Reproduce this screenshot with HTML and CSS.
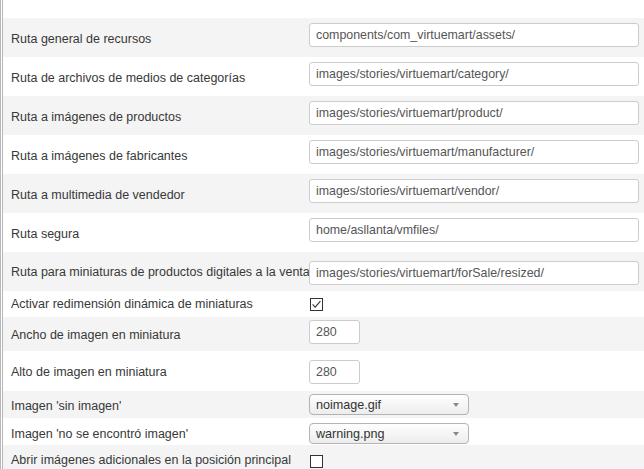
FILE: index.html
```html
<!DOCTYPE html>
<html lang="es">
<head>
    <meta charset="UTF-8">
    <meta name="viewport" content="width=device-width, initial-scale=1.0">
    <title>Configuración de medios</title>
    <link rel="stylesheet" href="styles.css">
</head>
<body>

    <div class="panel">
        <div class="row row-text shade">
            <label class="label" for="assetsPath">Ruta general de recursos</label>
            <input class="field" type="text" id="assetsPath" value="components/com_virtuemart/assets/">
        </div>
        <div class="row row-text">
            <label class="label" for="categoryPath">Ruta de archivos de medios de categorías</label>
            <input class="field" type="text" id="categoryPath" value="images/stories/virtuemart/category/">
        </div>
        <div class="row row-text shade">
            <label class="label" for="productPath">Ruta a imágenes de productos</label>
            <input class="field" type="text" id="productPath" value="images/stories/virtuemart/product/">
        </div>
        <div class="row row-text">
            <label class="label" for="manufacturerPath">Ruta a imágenes de fabricantes</label>
            <input class="field" type="text" id="manufacturerPath" value="images/stories/virtuemart/manufacturer/">
        </div>
        <div class="row row-text shade">
            <label class="label" for="vendorPath">Ruta a multimedia de vendedor</label>
            <input class="field" type="text" id="vendorPath" value="images/stories/virtuemart/vendor/">
        </div>
        <div class="row row-text">
            <label class="label" for="securePath">Ruta segura</label>
            <input class="field" type="text" id="securePath" value="home/asllanta/vmfiles/">
        </div>
        <div class="row row-text row-sale shade">
            <label class="label" for="forSalePath">Ruta para miniaturas de productos digitales a la venta</label>
            <input class="field" type="text" id="forSalePath" value="images/stories/virtuemart/forSale/resized/">
        </div>
        <div class="row row-check">
            <span class="label">Activar redimensión dinámica de miniaturas</span>
            <span class="check">
                <svg width="13" height="13" viewBox="0 0 13 13">
                    <rect x="0.5" y="0.5" width="12" height="12" fill="#fff" stroke="#333"/>
                    <path d="M2.6 6.4 L5.2 9.1 L10.4 3.2" fill="none" stroke="#333" stroke-width="1.1"/>
                </svg>
            </span>
        </div>
        <div class="row row-width shade">
            <label class="label" for="thumbWidth">Ancho de imagen en miniatura</label>
            <input class="field field-small" type="text" id="thumbWidth" value="280">
        </div>
        <div class="row row-height">
            <label class="label" for="thumbHeight">Alto de imagen en miniatura</label>
            <input class="field field-small" type="text" id="thumbHeight" value="280">
        </div>
        <div class="row row-select shade">
            <label class="label" for="noImage">Imagen 'sin imagen'</label>
            <span class="picker">
                <select id="noImage">
                    <option>noimage.gif</option>
                </select>
            </span>
        </div>
        <div class="row row-select row-select-2">
            <label class="label" for="notFound">Imagen 'no se encontró imagen'</label>
            <span class="picker">
                <select id="notFound">
                    <option>warning.png</option>
                </select>
            </span>
        </div>
        <div class="row row-last shade">
            <span class="label">Abrir imágenes adicionales en la posición principal</span>
            <span class="check">
                <svg width="13" height="13" viewBox="0 0 13 13">
                    <rect x="0.5" y="0.5" width="12" height="12" fill="#fff" stroke="#333"/>
                </svg>
            </span>
        </div>
    </div>

</body>
</html>
```

FILE: styles.css
```css
body {
    margin: 0;
    padding: 0;
    background: #fff;
    font-family: 'Liberation Sans', Arial, sans-serif;
    font-size: 12.5px;
    color: #333;
    overflow: hidden;
}

.panel {
    border-left: 3px double #b8b8b8;
    padding-top: 18px;
    min-height: 469px;
    box-sizing: border-box;
}

.row {
    display: grid;
    grid-template-columns: 298px 1fr;
    padding: 0 5px 0 8px;
    box-sizing: border-box;
}

.shade {
    background-color: #f4f4f4;
}

.label {
    align-self: center;
    white-space: nowrap;
    line-height: 16px;
    color: #383838;
    padding-top: 2px;
}

.row-text {
    height: 39px;
}

.row-text .field {
    margin-top: 5px;
}

.row-sale .label {
    padding-top: 0;
}

.row-sale .field {
    margin-top: 9px;
}

.row-check {
    height: 26px;
}

.row-check .label {
    padding-top: 0;
}

.row-width {
    height: 34px;
}

.row-width .field {
    margin-top: 3px;
}

.row-height {
    height: 40px;
}

.row-height .field {
    margin-top: 9px;
}

.row-select {
    height: 27px;
}

.row-select .picker {
    margin-top: 3px;
}

.row-select-2 .label {
    padding-top: 4px;
}

.row-select-2 .picker {
    margin-top: 5px;
}

.row-last {
    height: 26px;
}

.row-last .label {
    padding-top: 4px;
}

.row-last .check {
    margin-top: 10px;
    align-self: start;
}

.field {
    align-self: start;
    display: block;
    width: 100%;
    height: 24px;
    box-sizing: border-box;
    padding: 0 6px;
    border: 1px solid #ccc;
    border-radius: 3px;
    background: #fff;
    font-family: 'Liberation Sans', Arial, sans-serif;
    font-size: 12.4px;
    color: #555;
    outline: none;
}

.field-small {
    width: 51px;
}

.check {
    align-self: center;
    display: block;
    width: 13px;
    height: 13px;
    margin-left: 1px;
}

.check svg {
    display: block;
}

.picker {
    position: relative;
    align-self: start;
    display: block;
    width: 160px;
    height: 21px;
}

.picker select {
    appearance: none;
    -webkit-appearance: none;
    display: block;
    width: 160px;
    height: 21px;
    box-sizing: border-box;
    padding: 0 6px;
    border: 1px solid #b3b3b3;
    border-radius: 4px;
    background: linear-gradient(#fefefe, #ededed);
    font-family: 'Liberation Sans', Arial, sans-serif;
    font-size: 12.6px;
    color: #333;
    outline: none;
}

.picker::after {
    content: "";
    position: absolute;
    right: 10px;
    top: 9px;
    border-left: 3px solid transparent;
    border-right: 3px solid transparent;
    border-top: 4px solid #888;
    pointer-events: none;
}
```
